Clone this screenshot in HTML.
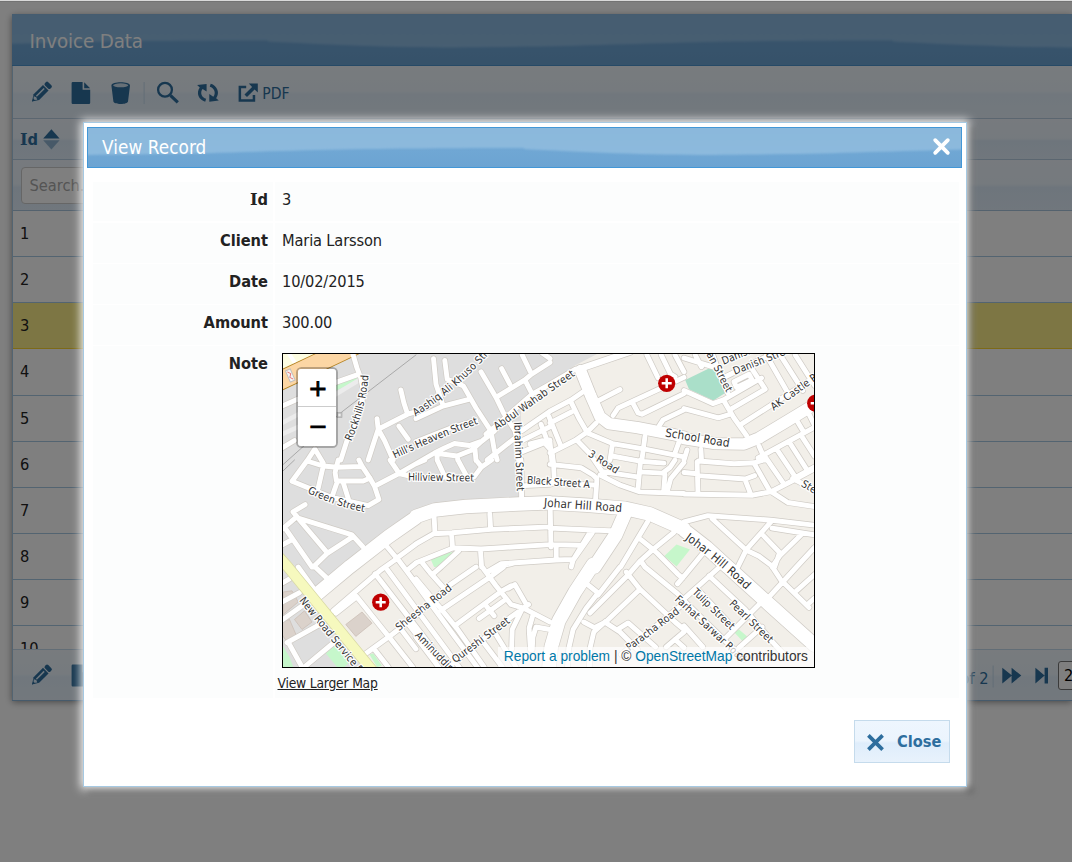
<!DOCTYPE html>
<html>
<head>
<meta charset="utf-8">
<title>Invoice Data</title>
<style>
html,body{margin:0;padding:0;}
html{overflow:hidden}
body{width:1072px;height:862px;overflow:hidden;background:#fff;position:relative;
 font-family:"DejaVu Sans Condensed","Liberation Sans",sans-serif;font-size:16.25px;color:#222;}
.abs{position:absolute;}
/* ---------- underlying grid panel ---------- */
#panel{position:absolute;left:12px;top:14px;width:1060px;height:686px;background:#fff;
 box-shadow:0 2px 7px rgba(0,0,0,.45);}
#phead{position:absolute;left:0;top:0;right:0;height:52px;overflow:hidden;background:linear-gradient(#74aad9 0,#70a7d7 55%,#6ca4d4 100%);}
#phead svg,#dtitle svg.wv{position:absolute;left:0;top:0}
#phead span{position:absolute;left:17.5px;top:15px;font-size:20.3px;color:#fff;white-space:nowrap;letter-spacing:-.1px}
.tb{position:absolute;left:0;right:0;height:52px;
 background:linear-gradient(#f0f7fd 0,#ecf5fd 48%,#e2effb 54%,#e6f1fb 100%);}
#tbar{top:52px}
#pager{top:635px;height:51px;overflow:hidden;border-top:1px solid #c5dbec;box-sizing:border-box}
#chead{position:absolute;left:0;right:0;top:104px;height:42px;box-sizing:border-box;
 border-top:1px solid #b7cde0;border-bottom:1px solid #b7cde0;
 background:linear-gradient(#eef5fc 0,#ebf4fc 48%,#dcebf9 55%,#e2eefa 100%);}
#srow{position:absolute;left:0;right:0;top:146px;height:51px;box-sizing:border-box;
 border-bottom:1px solid #a9c4dc;
 background:linear-gradient(#eef5fc 0,#ebf4fc 48%,#dcebf9 55%,#e2eefa 100%);}
#sinp{position:absolute;left:9px;top:6.5px;width:200px;height:37px;box-sizing:border-box;border:1px solid #ccc;border-radius:4px;background:#fff;
 color:#a9a9a9;font-size:16.25px;line-height:35.5px;padding-left:7.5px}
#rows{position:absolute;left:0;right:0;top:197px;height:438px;overflow:hidden}
.r{height:46.15px;box-sizing:border-box;border-bottom:1px solid #a6c9e2;line-height:45.5px;padding-left:8px;font-size:16.25px;color:#222}
.r.sel{background:#fbec88;border-bottom-color:#fad42e;}
#overlay{position:absolute;left:0;top:0;width:1072px;height:862px;background:rgba(0,0,0,.5);}
#topstrip{position:absolute;left:0;top:0;width:1072px;height:1px;background:#d9d9d9}
#topstrip2{position:absolute;left:0;top:1px;width:1072px;height:1px;background:#737373}
/* ---------- dialog ---------- */
#dlg{position:absolute;left:83px;top:122px;width:884px;height:665px;box-sizing:border-box;border:1px solid #a6c9e2;
 background:#fff;
 box-shadow:0 0 9px 2px rgba(255,255,255,.95), 5px 5px 6px 1px rgba(0,0,0,.35);}
#dtitle{position:absolute;left:3px;top:4px;width:875px;height:41px;box-sizing:border-box;border:1px solid #4297d7;
 background:linear-gradient(#74aad7 0,#70a7d4 55%,#6ca4d2 100%);}
#dtitle span{position:absolute;left:14px;top:9px;color:#fff;font-size:18.75px;white-space:nowrap;letter-spacing:.08px}
.lbl{position:absolute;left:61px;width:123px;text-align:right;font-weight:bold;font-size:16.25px;color:#222;white-space:nowrap;line-height:20px}
.val{position:absolute;left:198px;font-size:16.25px;color:#222;white-space:nowrap;line-height:20px;letter-spacing:-.15px}
#map{position:absolute;left:198px;top:230px;width:533px;height:315px;box-sizing:border-box;border:1px solid #000;overflow:hidden;background:#f2efe9}
#vlm{position:absolute;left:193.5px;top:551px;font-size:13.75px;line-height:18px;letter-spacing:-.2px;color:#222;text-decoration:underline;white-space:nowrap}
#closeb{position:absolute;left:770px;top:597px;width:96px;height:43px;box-sizing:border-box;border:1px solid #c5dbec;
 background:linear-gradient(#eef6fe 0,#ebf4fd 48%,#dfedfb 54%,#e8f2fc 100%);}
#closeb span{position:absolute;left:42px;top:11px;font-weight:bold;font-size:16.25px;color:#2e6e9e;line-height:20px}
#msvg{position:absolute;left:0;top:0;display:block}
#msvg .lb text{font-family:"DejaVu Sans Condensed","Liberation Sans",sans-serif;fill:#333;stroke:#fff;stroke-width:2.6px;stroke-linejoin:round;paint-order:stroke fill;dominant-baseline:central;stroke-opacity:.9}
#zc{position:absolute;left:12.5px;top:12.6px;border:2.5px solid rgba(0,0,0,.25);border-radius:5.5px;background-clip:padding-box;width:38.7px}
#zc a{display:block;width:38.7px;height:38.4px;background:#fff;color:#000;text-align:center;font:23px/39px "DejaVu Sans","Liberation Sans",sans-serif;-webkit-text-stroke:.9px #000;text-indent:2px}
#zc #zin{border-bottom:1.25px solid #ccc;border-radius:3px 3px 0 0;height:37.8px}
#zout{border-radius:0 0 3px 3px}
#attr{position:absolute;right:0;bottom:0;height:20px;line-height:19px;padding:0 6px;background:rgba(255,255,255,.7);color:#333;white-space:nowrap;
 font:13.75px/19px "Liberation Sans",sans-serif;}
#attr a{color:#0078a8}
#idh{position:absolute;left:8px;top:10.5px;font-weight:bold;font-size:16.25px;color:#2e6e9e;line-height:20px}
#psel{position:absolute;left:1046px;top:11px;width:50px;height:29px;box-sizing:border-box;border:1px solid #777;border-radius:3px;background:#fff;font-size:16.25px;line-height:27px;padding-left:5px;color:#000}
.sf{font-family:"DejaVu Serif","Liberation Serif",serif}
#ftab{position:absolute;left:9px;top:59px;width:866px;height:520px}
#ftab i{position:absolute;left:0;width:180px;background:#fcfdfd;display:block}
#ftab i::after{content:"";position:absolute;left:182px;top:0;width:684px;height:100%;background:#fcfdfd}
</style>
</head>
<body>
<div id="panel">
 <div id="phead"><svg width="1100" height="52" viewBox="0 0 1100 52"><defs><linearGradient id="hg" x1="0" y1="0" x2="0" y2="1"><stop offset="0" stop-color="#8bb9e1"/><stop offset="1" stop-color="#8fbde4"/></linearGradient></defs><path fill="url(#hg)" style="filter:blur(.9px)" d="M-6 -6H1106L1106.0 33.1L1100.0 33.1L1092.0 33.2L1080.0 33.3L1068.0 33.4L1056.0 33.4L1044.0 33.3L1032.0 33.1L1020.0 33.0L1008.0 32.8L996.0 32.5L984.0 32.1L972.0 31.6L960.0 31.2L948.0 30.8L936.0 30.3L924.0 29.7L912.0 29.1L900.0 28.5L888.0 27.9L881.0 27.6L881.0 26.4L876.0 26.4L864.0 26.5L852.0 26.5L840.0 26.6L828.0 26.6L816.0 26.7L804.0 26.7L792.0 26.8L780.0 26.9L768.0 27.0L756.0 27.1L744.0 27.3L732.0 27.4L720.0 27.6L708.0 27.8L696.0 28.0L684.0 28.2L672.0 28.5L660.0 28.9L648.0 29.2L636.0 29.5L624.0 29.9L612.0 30.2L600.0 30.6L588.0 31.0L576.0 31.3L564.0 31.7L552.0 31.9L540.0 32.2L528.0 32.4L516.0 32.6L504.0 32.8L492.0 32.9L480.0 33.1L468.0 33.2L456.0 33.3L444.0 33.4L432.0 33.4L420.0 33.3L408.0 33.1L396.0 33.0L384.0 32.8L372.0 32.6L360.0 32.1L348.0 31.7L336.0 31.2L324.0 30.8L312.0 30.3L300.0 29.7L288.0 29.1L276.0 28.6L264.0 28.0L256.0 27.6L256.0 26.4L252.0 26.4L240.0 26.5L228.0 26.5L216.0 26.6L204.0 26.6L192.0 26.7L180.0 26.7L168.0 26.8L156.0 26.9L144.0 27.0L132.0 27.1L120.0 27.3L108.0 27.4L96.0 27.6L84.0 27.8L72.0 28.0L60.0 28.2L48.0 28.5L36.0 28.8L24.0 29.2L12.0 29.5L0.0 29.8L-6 29.8Z"/></svg><span>Invoice Data</span></div>
 <div id="tbar" class="tb"></div>
 <svg class="ticons" style="position:absolute;left:0;top:52px" width="300" height="52" viewBox="12 66 300 52" fill="#2e6e9e">
  <g id="ic-pencil" transform="translate(40.9 92.6) rotate(45)">
   <rect x="-3.9" y="-12.6" width="7.8" height="4.6" rx="1.7"/>
   <path d="M-3.9 -6.9H3.9V6.4L0 12.6L-3.9 6.4Z"/>
   <path d="M-0.6 -5.2V5.8" stroke="#dfeffc" stroke-width="1.5" fill="none"/>
   <path d="M-2.4 7.6L0 6.5L2.4 7.6L0 10.6Z" fill="#dfeffc"/>
   <path d="M-1.2 9.6L1.2 9.6L0 12.6Z"/>
  </g>
  <g id="ic-doc" transform="translate(71.6 82)">
   <path d="M1.2 0H11V7.8H18.6V20.7Q18.6 21.9 17.4 21.9H1.2Q0 21.9 0 20.7V1.2Q0 0 1.2 0Z"/>
   <path d="M12.6 0.2L18.5 6.2H12.6Z"/>
  </g>
  <g id="ic-trash" transform="translate(111.4 82)">
   <path d="M0 3.4C0 -0.9 18.6 -0.9 18.6 3.4L16.6 19.4C16.3 22.7 2.3 22.7 2 19.4Z"/>
   <ellipse cx="9.3" cy="3.3" rx="7.6" ry="2" fill="#cfe0ee"/>
  </g>
  <rect x="143.6" y="82" width="1" height="22" fill="#c5dbec"/>
  <g id="ic-search" fill="none" stroke="#2e6e9e">
   <circle cx="165" cy="89.8" r="6.9" stroke-width="2.3"/>
   <path d="M170.4 95.4L177.8 102.4" stroke-width="3.2"/>
  </g>
  <g id="ic-refresh" transform="translate(190 76)">
   <path id="rfa" d="M15.2 25.75A10 9.3 0 0 1 9.76 11.47L7.1 9.1L16.6 7.9V15.6L12.6 12.95A6.6 6.2 0 0 0 16.13 22.76Z"/>
   <path d="M15.2 25.75A10 9.3 0 0 1 9.76 11.47L7.1 9.1L16.6 7.9V15.6L12.6 12.95A6.6 6.2 0 0 0 16.13 22.76Z" transform="rotate(180 17.95 16.8)"/>
  </g>
  <g id="ic-ext" transform="translate(238.6 83.6)">
   <path d="M7.6 2.2H0V18.2H16.6V11.4H14.1V15.7H2.5V4.7H7.6Z"/>
   <path d="M10.2 0H19.2V9L16 5.8L8.4 13.4L5.9 10.9L13.5 3.3Z"/>
  </g>
  <text x="262.3" y="98.5" font-size="15.6" font-family="DejaVu Sans Condensed,Liberation Sans,sans-serif">PDF</text>
 </svg>

 <div id="chead"><span id="idh"><span class="sf">I</span>d</span>
  <svg style="position:absolute;left:30.5px;top:10px" width="17" height="21" viewBox="0 0 17 21"><path d="M0.2 9.6L8.4 0.2L16.6 9.6Z" fill="#2e6e9e"/><path d="M0.2 11.2L8.4 20.4L16.6 11.2Z" fill="#2e6e9e" opacity=".45"/></svg></div>
 <div id="srow"><div id="sinp">Search...</div></div>
 <div id="rows">
  <div class="r">1</div><div class="r">2</div><div class="r sel">3</div><div class="r">4</div><div class="r">5</div>
  <div class="r">6</div><div class="r">7</div><div class="r">8</div><div class="r">9</div><div class="r">10</div>
 </div>
 <div id="pager" class="tb">
  <svg style="position:absolute;left:0;top:0" width="1072" height="51" viewBox="12 649.5 1072 51" fill="#2e6e9e">
   <g transform="translate(40.9 675) rotate(45)">
   <rect x="-3.9" y="-12.6" width="7.8" height="4.6" rx="1.7"/>
   <path d="M-3.9 -6.9H3.9V6.4L0 12.6L-3.9 6.4Z"/>
   <path d="M-0.6 -5.2V5.8" stroke="#dfeffc" stroke-width="1.5" fill="none"/>
   <path d="M-2.4 7.6L0 6.5L2.4 7.6L0 10.6Z" fill="#dfeffc"/>
   <path d="M-1.2 9.6L1.2 9.6L0 12.6Z"/>
   </g>
   <g transform="translate(71.6 664)">
   <path d="M1.2 0H11V7.8H18.6V20.7Q18.6 21.9 17.4 21.9H1.2Q0 21.9 0 20.7V1.2Q0 0 1.2 0Z"/>
   <path d="M12.6 0.2L18.5 6.2H12.6Z"/>
   </g>
   <text x="988.5" y="683" text-anchor="end" font-size="16.25" font-family="DejaVu Sans Condensed,Liberation Sans,sans-serif">Page 1 of 2</text>
   <rect x="992.6" y="665" width="1" height="22" fill="#c5dbec"/>
   <path d="M1002.3 667.3L1012 675.1L1002.3 682.9ZM1011.6 667.3L1021.3 675.1L1011.6 682.9Z"/>
   <path d="M1035.4 667.3L1044.6 675.1L1035.4 682.9ZM1044.6 667.3H1048V682.9H1044.6Z"/>
  </svg>
  <div id="psel">20</div>
 </div>
</div>
<div style="position:absolute;left:12px;top:66px;width:1px;height:634px;background:#a6c9e2"></div>
<div style="position:absolute;left:12px;top:700px;width:1060px;height:1px;background:#8db4d6"></div>
<div style="position:absolute;left:12px;top:65px;width:1060px;height:1px;background:#4c94cf"></div>
<div id="overlay"></div>
<div id="topstrip"></div><div id="topstrip2"></div>
<div id="dlg">
 <div id="dtitle"><svg class="wv" width="873" height="39" viewBox="0 0 873 39"><defs><linearGradient id="tg" x1="0" y1="0" x2="0" y2="1"><stop offset="0" stop-color="#8ab8dc"/><stop offset="1" stop-color="#8dbadd"/></linearGradient></defs><path fill="url(#tg)" style="filter:blur(.9px)" d="M-6 -6H879L879.0 21.5L873.0 21.5L864.0 21.7L852.0 22.0L840.0 22.4L828.0 22.7L816.0 23.0L804.0 23.4L792.0 23.7L780.0 24.1L768.0 24.5L756.0 24.8L744.0 25.2L732.0 25.4L720.0 25.7L708.0 25.9L696.0 26.1L684.0 26.3L672.0 26.4L660.0 26.6L648.0 26.7L636.0 26.8L624.0 26.9L612.0 26.9L600.0 26.8L588.0 26.6L576.0 26.5L564.0 26.3L552.0 26.1L540.0 25.6L528.0 25.2L516.0 24.7L504.0 24.3L492.0 23.8L480.0 23.2L468.0 22.6L456.0 22.1L444.0 21.5L436.0 21.1L436.0 19.9L432.0 19.9L420.0 20.0L408.0 20.0L396.0 20.1L384.0 20.1L372.0 20.2L360.0 20.2L348.0 20.3L336.0 20.4L324.0 20.5L312.0 20.6L300.0 20.8L288.0 20.9L276.0 21.1L264.0 21.3L252.0 21.5L240.0 21.7L228.0 22.0L216.0 22.3L204.0 22.7L192.0 23.0L180.0 23.3L168.0 23.7L156.0 24.1L144.0 24.4L132.0 24.8L120.0 25.2L108.0 25.4L96.0 25.6L84.0 25.9L72.0 26.1L60.0 26.3L48.0 26.4L36.0 26.6L24.0 26.7L12.0 26.8L0.0 26.9L-6 26.9Z"/></svg><span>View Record</span>
  <svg style="position:absolute;left:844px;top:8.5px" width="19" height="19" viewBox="0 0 19 19"><path d="M3.2 3.2L15.8 15.8M15.8 3.2L3.2 15.8" stroke="#fff" stroke-width="3.8" stroke-linecap="round" fill="none"/></svg></div>
<div id="ftab"><i style="top:0;height:39px"></i><i style="top:41px;height:40px"></i><i style="top:82px;height:40px"></i><i style="top:123px;height:40px"></i><i style="top:164px;height:352px"></i></div>
 <div class="lbl" style="top:67px"><span class="sf">I</span>d</div><div class="val" style="top:67px">3</div>
 <div class="lbl" style="top:108px">Client</div><div class="val" style="top:108px">Maria Larsson</div>
 <div class="lbl" style="top:149px">Date</div><div class="val" style="top:149px">10/02/2015</div>
 <div class="lbl" style="top:190px">Amount</div><div class="val" style="top:190px">300.00</div>
 <div class="lbl" style="top:231px">Note</div>
 <div id="map"><svg id="msvg" width="531" height="313" viewBox="0 0 531 313">
<rect width="531" height="313" fill="#f2efe9"/>
<path fill="#dedede" d="M0 0L314 0L291 12L267 30L249 40L238 51L238 144L235 150L183 152.5L152 156L133 163L105 183L67 212L33 241L89 313L0 313Z"/>
<path fill="#fdfde2" d="M0 0L35 0L0 16Z"/>
<path fill="#aadfc9" d="M402.2 25.9L431 12.1L435.4 16.5L444.1 37.8L430.4 46.5L406 35.2Z"/>
<path fill="#c6f7cb" d="M53.4 29.6L72.8 22.1L74.6 25.9L53.4 36.5ZM148 206L156.1 199.1L174.9 197.9L163 206L153 213L151.1 213ZM381.4 201.9L393.5 190.4L407 195.6L393.5 212.5ZM-1 290.5L6.5 303L10.2 313L-1 313ZM42.8 299.2L52.8 290.5L66.5 308L61.5 313L54 313ZM86.5 300.5L90.2 299.2L99 311.8L94 313ZM451 278L456 275.5L464.8 283L459.8 287.4Z"/>
<path fill="#dbd2cb" stroke="#cbbfb6" stroke-width=".8" d="M62.8 270.5L79 258L89 269.2L72.8 282.4ZM0.2 238L9 236.8L15.2 248L0.2 260.5ZM11.5 265.5L21.5 256.8L29 268L19 275.5ZM-1 268L6.5 265.5L14 283L4 288L-1 280.5Z"/>
<g fill="none" stroke-linecap="round" stroke-linejoin="round">
<path stroke="#a9a9a9" stroke-width="1" d="M133 0.9L59 57.8L-1 111.5M-1 117.9L11.5 106"/>
<path stroke="#ececec" stroke-width="4.5" d="M-1 69L52.8 40.2L76.5 25.9M-1 80.2L24 69"/>
<path stroke="#cfcbc5" stroke-width="6.3" d="M69.6 -1L74 14L77.8 24M77.8 24L80.2 36.5L79 49L72.8 69L64 86.5L57.8 106M-1 52.1L52.8 28.4L74 20.9M117.8 35.9L120.9 49L124.6 60.2M133 57.8L124.6 60.2L95.2 75.2M94 64.6L95.2 75.2L91.5 86.5L85.2 106M95.2 75.2L101.5 86.5L110.2 106M115.9 72.1L125.2 85.2M32.1 95.4L40.2 109.1M24.6 106L31.8 95M-1 94L11.5 86.5M150.5 4.6L153 30.2L159.9 50.9M161.8 6.5L164.2 25.2L180.5 32.1L193 54L208 77.1L211.1 95.2L214.2 106M133 64.6L159.9 52.1L186.8 45.2M198 17.8L213 43.4L220.5 59L231.8 76.5L234.9 89L235.5 106M267 8.4L248.6 20.2L241.8 25.9L213 43.4M218.6 14.6L226.8 30.2M239.2 0.9L248.6 20.2M241.8 25.9L249.2 40.2M259.2 -1L267 4.6M203 80.2L210.5 74L249.2 40.2L267 30.2M133 87.8L168 74L193 66.5M230.5 85.2L204.2 106M239.2 76.5L247 71L267 57.2M239.2 86.5L267 72.8M239.2 97.8L267 86.5M258 70.2L267 94M116 119.5L151.5 99L161.5 94L171.5 89.5L186.5 91.5L199 87L211.5 77M151.5 99L174 102L189 96L199 87M154 100.2L154.2 106.5M174 102L174.9 106.5M192 95.2L193 106.5M267 30.2L292.6 15M267 57.2L288.2 46L300.1 37.8M287.6 47.1L295.8 64L304.5 79M267 69L288.9 57.8M267 99L292 86.5L304.5 77.8L313.2 69M265.8 62.2L278.2 92.9M337 35.5L314.5 47.1M330.1 61.5L335.1 54L375.8 35.2L401 23.4M350.1 49.6L355.1 59L358.9 60.2L401 39.6M376.4 71.5L380.1 65.9L401 55.9M363.9 0.9L375.1 24M378.2 0.9L387.6 20.2L392 22.8M392 0.9L401 17.8M362 82.1L358.9 106M303.2 78.4L329.5 89.6L362 95.2L401 102.8M329.5 89.6L327 106M397 85.2L392 99M457.2 70.9L488.5 50.9L531.6 23.4M446.6 55.9L482.2 35.2M440.4 45.9L451 64L463.5 81.5M401 36.5L429.8 49.6L440.4 45.9L478.5 24M401 54.6L435.4 63.8L447.9 60M429.1 -1L437.2 21.5L444.8 39M442.2 22.8L491 -1M469.1 15.2L482.2 35.2M483.5 1.5L503.5 36.5M497.2 0.9L519.8 36.5M512.2 0.9L531.6 31.5M451 27.8L466 20.2L469.1 25.9L453.5 33.4L451 27.8M401 4L429.8 12.8M412.2 0.9L418.5 12.8M476 92.1L482.2 106M475.1 104L533 72.4M514.1 67.1L519.8 76.5M526 60.2L531.6 71.5M417.9 95.2L418.5 106M404.1 95.9L401 106M9 127.2L24.6 106M9 127.2L49 143.5L85.2 151.6L95.9 145.4L91.5 132.2L86.5 123.5L79 112.2L75.9 106M24 107L40.2 112L54 113.2L79 112.5M55.2 106L52.1 118.5L53.4 127L80.2 127L87.1 124.1M40.2 112.2L35.2 134.1M54 128.5L49 142.9M60.2 128.5L66.5 148.5M91.5 132.2L116 119.5L133 123.5M107.1 106L116.5 119.8M22.1 150.6L10 157.9L15.2 164.1L69 180.8L79.6 192.5M12.1 164.1L-1 175.4M16.5 166L44.6 199.1M3.4 176L29 213M69.6 182.9L44.6 199.1L30.2 213M-1 191L8.4 186M238 106L238.6 143.5M133 123.5L191.1 122.9L198.6 112.9L208.6 106M154.2 106L161.1 121M174.9 106L183 121M193 106L198.6 112.9M133 109.8L141.8 106M133 189.8L150.5 179.8L169.2 178.8L208 175.4L267 172.9M151.1 162.9L152 179.5M206.8 159.8L207.6 175M168.6 179.8L169.5 193.5M267 190.6L198 195L170.5 193.8L133 208.8M175.5 197L158 213M197.4 195.4L198.6 213M241.8 131.6L267 130.4M267 129.1L310.1 131M267 110.4L298.2 113.8L310.1 121L313.9 124.8L312.6 144.8M317 121L337 131L357 137.9L401 139.5M320.8 117.9L354.5 122.9M357.6 106L355.1 134.1M356.4 117.9L379.5 119.1L387 113.5L392 106M382 120.4L380.8 135.4M401 108.5L387.6 124.8L384.5 136.6M267 174.1L327 176.8L333.2 175.4M307 178.2L290.1 206L288.2 213M267 190.6L297 191.2M273.2 192.2L273.2 205.4M364.5 167.9L337.6 213M357.6 185.4L368.9 194.5L374.5 199.5L394.5 219.8L399.5 224.1M390.8 178.5L370.1 195.4L357 207.2M401 167.9L424.8 161.6L488.5 166.2L531.6 171.2M401 140L469.8 141.2L488.5 137.5L508.5 127.2L531.6 114.8M488.5 137.9L504.8 148.5L531.6 152.5M414.1 107.9L415 139.1M401 118.5L414.5 119.8M415 121.6L462.2 125L471.6 121.6M462.2 126L467.2 138.8M471 109.1L486.6 136.6M415.4 107L451 109.8L471 108.8L481 106M480.5 100.5L499.6 128.2M493 94.2L511.4 121.6M505.8 87.2L523.6 115.2M517.8 80.8L531.6 102.2M509.6 124.5L531.6 136M513.5 122.9L531.6 112.9M487.9 167.9L463.5 195.4L454.8 213M429.1 164.8L462.9 195.8M480.4 181.6L496.6 198.5L491.6 213M517.9 181L497.2 201.2L489.1 213M462.9 196L476 202.2L488.5 211.6L497.9 226L526 253.5M489.1 174.1L531.6 180.8M531.6 193.5L513.5 213M15.2 213L30.9 234.9M32.1 213L43.4 223.6M-1 266.1L20.9 250.5M4 288.6L37.8 269.9M22.8 311.8L51.5 288M-1 248L16.5 238.6M-1 229.2L6.5 224.9M6.5 290.5L19 313M50.2 256.8L97 216.6L112 206M73.4 242.4L106.5 283.6M81.5 300.5L109 280.5L133 261.8M107.1 284.2L129.6 313M91.5 295.5L105.2 313M117.8 274.9L133 294.9M125.2 269.9L133 279.9M52.8 259.2L72.8 243.6M133 261.8L166.8 231.1L193 213M158 256.1L208 222.4L220.5 213M171.8 271.8L219.2 236.8L228 231.8M166.8 311.8L228 263L245.5 250.5M196.1 264.5L220.5 247M203.6 252.4L211.1 261.8M133 224.9L158 254.9L174.2 274.9L201.1 313M201.1 289.2L219.2 313M213 280.5L233 313M199.2 213L213 231.8L228 250.5L240.5 254.2L267 268M225.5 234.2L231.8 230.5L243 249.9M239.2 254.9L229.2 275.5L228.6 295.5M249.9 261.1L246.1 274.2L247.4 295.5M267 275.5L253 273L249.9 283L249.2 295.5M133 283L155.5 313M313.9 240.5L303.2 254.2L290.1 275.5L285.8 294.2L284.5 313M322.6 267.4L310.8 278L307 294.2L306.4 313M304.5 230.5L315.8 239.5M315.1 241.1L337 213M307 259.1L344.5 221.6L357 207.2M300.8 268L311.4 273.6L322.6 268L357 235.2M343.2 218L357 235.2L392 268L401 275.5M334.5 275.5L345.1 268.9L372.6 293M322.6 268.6L337 278L354.5 295.5M338.2 300.5L401 249.2M357.6 206.6L362 213L393.2 238.6M393.2 238.6L401 246.1M383.2 293L392 285.5L401 278M392 285.5L401 293.6M401 244.9L436.6 213M441.6 284.9L476 250.5M456 293.6L479.1 273M486.6 242.4L513.5 213M513.5 236.8L531.6 220.5M526 249.2L531.6 244.2M426 221.8L462.2 255.5L488.5 286.8L501 300.5M413.5 234.2L451.6 274.9M401 246.8L448.5 293L461 305.5M394.5 229.8L402 221L419.5 199.8M401 271.8L419.8 293M139.5 209.1L147 218.5L162 235.4M207.6 216.6L217 212.2L231 209.1M102.6 191L115.8 206.6L124.4 217.9L172 283L194.5 313.5M104.5 216L153.9 283L176.4 313.5M92 219.8L97 226L140.8 283L164.1 313.5M112 205.4L133 190M125.8 214.8L133 209M150.1 219.8L158 213M267.2 154L268 193M205.5 217.2L218 209.8L273 206L290.5 205.5L309.2 179M266.8 86L269.2 111M247 89.8L259.5 86.6L268.9 97.2L270.5 108.5L271.4 129.1M328.9 102L357 107.2L381 109.1M293.9 86.2L307 99.8L321.4 121"/>
<path stroke="#cfcbc5" stroke-width="7.6" d="M295.8 15.2L347 -2.2"/>
<path stroke="#cfcbc5" stroke-width="12.8" d="M297.6 16.5L307.6 41.5L317 62.8L325.8 69.6L354.5 73.6L392 80.9L401 83M401 84.6L432.2 89.6L461 90L476 84L501 69L531.6 50.5"/>
<path stroke="#cfcbc5" stroke-width="15" d="M66.5 213L105.2 182.9L133 163.5M133 162.5L151.8 156L183 152.5L235.5 150L267 148.8M267 149.1L304.5 151.2L342 154.4L367 160L401 175M343.5 156L332.6 181L311.4 213M401 176L423.5 193.5L444.8 213M67.1 212.4L32.8 241.1M310.1 210.5L292 238L275.8 266.8L268.2 293L265.8 315.5M442.2 210.5L488.5 252.4L531.6 291.1"/>
<path stroke="#fff" stroke-width="4" stroke-linecap="butt" d="M5.9 -0.4L12.8 10.2"/>
<path stroke="#b3811f" stroke-width="19.5" stroke-linecap="butt" d="M-33 41L137 -39.5"/>
<path stroke="#fcd6a4" stroke-width="18" stroke-linecap="butt" d="M-33 41L137 -39.5"/>
<path stroke="#fff" stroke-width="4.9" d="M69.6 -1L74 14L77.8 24M77.8 24L80.2 36.5L79 49L72.8 69L64 86.5L57.8 106M-1 52.1L52.8 28.4L74 20.9M117.8 35.9L120.9 49L124.6 60.2M133 57.8L124.6 60.2L95.2 75.2M94 64.6L95.2 75.2L91.5 86.5L85.2 106M95.2 75.2L101.5 86.5L110.2 106M115.9 72.1L125.2 85.2M32.1 95.4L40.2 109.1M24.6 106L31.8 95M-1 94L11.5 86.5M150.5 4.6L153 30.2L159.9 50.9M161.8 6.5L164.2 25.2L180.5 32.1L193 54L208 77.1L211.1 95.2L214.2 106M133 64.6L159.9 52.1L186.8 45.2M198 17.8L213 43.4L220.5 59L231.8 76.5L234.9 89L235.5 106M267 8.4L248.6 20.2L241.8 25.9L213 43.4M218.6 14.6L226.8 30.2M239.2 0.9L248.6 20.2M241.8 25.9L249.2 40.2M259.2 -1L267 4.6M203 80.2L210.5 74L249.2 40.2L267 30.2M133 87.8L168 74L193 66.5M230.5 85.2L204.2 106M239.2 76.5L247 71L267 57.2M239.2 86.5L267 72.8M239.2 97.8L267 86.5M258 70.2L267 94M116 119.5L151.5 99L161.5 94L171.5 89.5L186.5 91.5L199 87L211.5 77M151.5 99L174 102L189 96L199 87M154 100.2L154.2 106.5M174 102L174.9 106.5M192 95.2L193 106.5M267 30.2L292.6 15M267 57.2L288.2 46L300.1 37.8M287.6 47.1L295.8 64L304.5 79M267 69L288.9 57.8M267 99L292 86.5L304.5 77.8L313.2 69M265.8 62.2L278.2 92.9M337 35.5L314.5 47.1M330.1 61.5L335.1 54L375.8 35.2L401 23.4M350.1 49.6L355.1 59L358.9 60.2L401 39.6M376.4 71.5L380.1 65.9L401 55.9M363.9 0.9L375.1 24M378.2 0.9L387.6 20.2L392 22.8M392 0.9L401 17.8M362 82.1L358.9 106M303.2 78.4L329.5 89.6L362 95.2L401 102.8M329.5 89.6L327 106M397 85.2L392 99M457.2 70.9L488.5 50.9L531.6 23.4M446.6 55.9L482.2 35.2M440.4 45.9L451 64L463.5 81.5M401 36.5L429.8 49.6L440.4 45.9L478.5 24M401 54.6L435.4 63.8L447.9 60M429.1 -1L437.2 21.5L444.8 39M442.2 22.8L491 -1M469.1 15.2L482.2 35.2M483.5 1.5L503.5 36.5M497.2 0.9L519.8 36.5M512.2 0.9L531.6 31.5M451 27.8L466 20.2L469.1 25.9L453.5 33.4L451 27.8M401 4L429.8 12.8M412.2 0.9L418.5 12.8M476 92.1L482.2 106M475.1 104L533 72.4M514.1 67.1L519.8 76.5M526 60.2L531.6 71.5M417.9 95.2L418.5 106M404.1 95.9L401 106M9 127.2L24.6 106M9 127.2L49 143.5L85.2 151.6L95.9 145.4L91.5 132.2L86.5 123.5L79 112.2L75.9 106M24 107L40.2 112L54 113.2L79 112.5M55.2 106L52.1 118.5L53.4 127L80.2 127L87.1 124.1M40.2 112.2L35.2 134.1M54 128.5L49 142.9M60.2 128.5L66.5 148.5M91.5 132.2L116 119.5L133 123.5M107.1 106L116.5 119.8M22.1 150.6L10 157.9L15.2 164.1L69 180.8L79.6 192.5M12.1 164.1L-1 175.4M16.5 166L44.6 199.1M3.4 176L29 213M69.6 182.9L44.6 199.1L30.2 213M-1 191L8.4 186M238 106L238.6 143.5M133 123.5L191.1 122.9L198.6 112.9L208.6 106M154.2 106L161.1 121M174.9 106L183 121M193 106L198.6 112.9M133 109.8L141.8 106M133 189.8L150.5 179.8L169.2 178.8L208 175.4L267 172.9M151.1 162.9L152 179.5M206.8 159.8L207.6 175M168.6 179.8L169.5 193.5M267 190.6L198 195L170.5 193.8L133 208.8M175.5 197L158 213M197.4 195.4L198.6 213M241.8 131.6L267 130.4M267 129.1L310.1 131M267 110.4L298.2 113.8L310.1 121L313.9 124.8L312.6 144.8M317 121L337 131L357 137.9L401 139.5M320.8 117.9L354.5 122.9M357.6 106L355.1 134.1M356.4 117.9L379.5 119.1L387 113.5L392 106M382 120.4L380.8 135.4M401 108.5L387.6 124.8L384.5 136.6M267 174.1L327 176.8L333.2 175.4M307 178.2L290.1 206L288.2 213M267 190.6L297 191.2M273.2 192.2L273.2 205.4M364.5 167.9L337.6 213M357.6 185.4L368.9 194.5L374.5 199.5L394.5 219.8L399.5 224.1M390.8 178.5L370.1 195.4L357 207.2M401 167.9L424.8 161.6L488.5 166.2L531.6 171.2M401 140L469.8 141.2L488.5 137.5L508.5 127.2L531.6 114.8M488.5 137.9L504.8 148.5L531.6 152.5M414.1 107.9L415 139.1M401 118.5L414.5 119.8M415 121.6L462.2 125L471.6 121.6M462.2 126L467.2 138.8M471 109.1L486.6 136.6M415.4 107L451 109.8L471 108.8L481 106M480.5 100.5L499.6 128.2M493 94.2L511.4 121.6M505.8 87.2L523.6 115.2M517.8 80.8L531.6 102.2M509.6 124.5L531.6 136M513.5 122.9L531.6 112.9M487.9 167.9L463.5 195.4L454.8 213M429.1 164.8L462.9 195.8M480.4 181.6L496.6 198.5L491.6 213M517.9 181L497.2 201.2L489.1 213M462.9 196L476 202.2L488.5 211.6L497.9 226L526 253.5M489.1 174.1L531.6 180.8M531.6 193.5L513.5 213M15.2 213L30.9 234.9M32.1 213L43.4 223.6M-1 266.1L20.9 250.5M4 288.6L37.8 269.9M22.8 311.8L51.5 288M-1 248L16.5 238.6M-1 229.2L6.5 224.9M6.5 290.5L19 313M50.2 256.8L97 216.6L112 206M73.4 242.4L106.5 283.6M81.5 300.5L109 280.5L133 261.8M107.1 284.2L129.6 313M91.5 295.5L105.2 313M117.8 274.9L133 294.9M125.2 269.9L133 279.9M52.8 259.2L72.8 243.6M133 261.8L166.8 231.1L193 213M158 256.1L208 222.4L220.5 213M171.8 271.8L219.2 236.8L228 231.8M166.8 311.8L228 263L245.5 250.5M196.1 264.5L220.5 247M203.6 252.4L211.1 261.8M133 224.9L158 254.9L174.2 274.9L201.1 313M201.1 289.2L219.2 313M213 280.5L233 313M199.2 213L213 231.8L228 250.5L240.5 254.2L267 268M225.5 234.2L231.8 230.5L243 249.9M239.2 254.9L229.2 275.5L228.6 295.5M249.9 261.1L246.1 274.2L247.4 295.5M267 275.5L253 273L249.9 283L249.2 295.5M133 283L155.5 313M313.9 240.5L303.2 254.2L290.1 275.5L285.8 294.2L284.5 313M322.6 267.4L310.8 278L307 294.2L306.4 313M304.5 230.5L315.8 239.5M315.1 241.1L337 213M307 259.1L344.5 221.6L357 207.2M300.8 268L311.4 273.6L322.6 268L357 235.2M343.2 218L357 235.2L392 268L401 275.5M334.5 275.5L345.1 268.9L372.6 293M322.6 268.6L337 278L354.5 295.5M338.2 300.5L401 249.2M357.6 206.6L362 213L393.2 238.6M393.2 238.6L401 246.1M383.2 293L392 285.5L401 278M392 285.5L401 293.6M401 244.9L436.6 213M441.6 284.9L476 250.5M456 293.6L479.1 273M486.6 242.4L513.5 213M513.5 236.8L531.6 220.5M526 249.2L531.6 244.2M426 221.8L462.2 255.5L488.5 286.8L501 300.5M413.5 234.2L451.6 274.9M401 246.8L448.5 293L461 305.5M394.5 229.8L402 221L419.5 199.8M401 271.8L419.8 293M139.5 209.1L147 218.5L162 235.4M207.6 216.6L217 212.2L231 209.1M102.6 191L115.8 206.6L124.4 217.9L172 283L194.5 313.5M104.5 216L153.9 283L176.4 313.5M92 219.8L97 226L140.8 283L164.1 313.5M112 205.4L133 190M125.8 214.8L133 209M150.1 219.8L158 213M267.2 154L268 193M205.5 217.2L218 209.8L273 206L290.5 205.5L309.2 179M266.8 86L269.2 111M247 89.8L259.5 86.6L268.9 97.2L270.5 108.5L271.4 129.1M328.9 102L357 107.2L381 109.1M293.9 86.2L307 99.8L321.4 121"/>
<path stroke="#fff" stroke-width="6.2" d="M295.8 15.2L347 -2.2"/>
<path stroke="#fff" stroke-width="11.4" d="M297.6 16.5L307.6 41.5L317 62.8L325.8 69.6L354.5 73.6L392 80.9L401 83M401 84.6L432.2 89.6L461 90L476 84L501 69L531.6 50.5"/>
<path stroke="#fff" stroke-width="13.6" d="M66.5 213L105.2 182.9L133 163.5M133 162.5L151.8 156L183 152.5L235.5 150L267 148.8M267 149.1L304.5 151.2L342 154.4L367 160L401 175M343.5 156L332.6 181L311.4 213M401 176L423.5 193.5L444.8 213M67.1 212.4L32.8 241.1M310.1 210.5L292 238L275.8 266.8L268.2 293L265.8 315.5M442.2 210.5L488.5 252.4L531.6 291.1"/>
<path stroke="#d8d9a5" stroke-width="11.2" stroke-linecap="butt" d="M-8.5 198L4.9 213L86.5 313L94 321.8"/>
<path stroke="#f6f9be" stroke-width="9.8" stroke-linecap="butt" d="M-8.5 198L4.9 213L86.5 313L94 321.8"/>
</g>
<g transform="translate(7.3 21.5) rotate(-24)"><rect x="-2.6" y="-6" width="5.2" height="12" fill="#f4f4f4" stroke="#bdbdbd" stroke-width=".9"/><path d="M-1.2 -4.5L1.2 -1.5L-1.2 1.5L1.2 4.5" stroke="#e87070" stroke-width=".9" fill="none"/></g>
<rect x="54.0" y="58.5" width="5" height="5" fill="#c2c2c2" stroke="#a5a5a5" stroke-width=".6"/><circle cx="56.5" cy="61.0" r="1.3" fill="#ececec"/>
<defs>
<path id="lp0" d="M64.6 86 Q80 50 81.3 21"/>
<path id="lp1" d="M130.5 59 Q177 30 219 -21"/>
<path id="lp2" d="M110 101 Q157 79 194 66"/>
<path id="lp3" d="M211.5 73 L290 18"/>
<path id="lp4" d="M235 68 L238 137"/>
<path id="lp5" d="M125 122.5 L191 123.5"/>
<path id="lp6" d="M26 135 Q54 149 82 154"/>
<path id="lp7" d="M382.3 78.5 L446.5 89.3"/>
<path id="lp8" d="M306.6 98.3 L335.3 116.5"/>
<path id="lp9" d="M244 125.5 L307 130"/>
<path id="lp10" d="M261 148.5 L339 154"/>
<path id="lp11" d="M404 182 Q433 202 466 233"/>
<path id="lp12" d="M113.6 274 L167 232"/>
<path id="lp13" d="M134.5 279 L192 339"/>
<path id="lp14" d="M170 306 L225 265"/>
<path id="lp15" d="M19 244 L92 334"/>
<path id="lp16" d="M344 294 L394.5 255.5"/>
<path id="lp17" d="M394 243 L465 309"/>
<path id="lp18" d="M411.6 236 L450.4 273.6"/>
<path id="lp19" d="M448.5 247.4 L489 286.7"/>
<path id="lp20" d="M450.4 17 L517 -9.3"/>
<path id="lp21" d="M439 7 L506 -20"/>
<path id="lp22" d="M410 -34 L447 37"/>
<path id="lp23" d="M488.5 53.5 L543 14.3"/>
<path id="lp24" d="M519.7 128.3 L565 156"/>
</defs>
<g class="lb">
<text font-size="10.5" textLength="67.5"><textPath href="#lp0" textLength="67.5">Rockhills Road</textPath></text>
<text font-size="10.5"><textPath href="#lp1">Aashiq Ali Khuso Street</textPath></text>
<text font-size="10.5" textLength="91"><textPath href="#lp2" textLength="91">Hill&#39;s Heaven Street</textPath></text>
<text font-size="10.5" textLength="95.9"><textPath href="#lp3" textLength="95.9">Abdul Wahab Street</textPath></text>
<text font-size="10.5" textLength="69.1"><textPath href="#lp4" textLength="69.1">Ibrahim Street</textPath></text>
<text font-size="10.5" textLength="66"><textPath href="#lp5" textLength="66">Hillview Street</textPath></text>
<text font-size="10.5" textLength="59.3"><textPath href="#lp6" textLength="59.3">Green Street</textPath></text>
<text font-size="11.8" textLength="65.1"><textPath href="#lp7" textLength="65.1">School Road</textPath></text>
<text font-size="10.5" textLength="34"><textPath href="#lp8" textLength="34">3 Road</textPath></text>
<text font-size="10.5" textLength="63.2"><textPath href="#lp9" textLength="63.2">Black Street A</textPath></text>
<text font-size="11.8" textLength="78.2"><textPath href="#lp10" textLength="78.2">Johar Hill Road</textPath></text>
<text font-size="11.8" textLength="80.4"><textPath href="#lp11" textLength="80.4">Johar Hill Road</textPath></text>
<text font-size="10.5" textLength="67.9"><textPath href="#lp12" textLength="67.9">Sheesha Road</textPath></text>
<text font-size="10.5"><textPath href="#lp13">Aminuddin Road</textPath></text>
<text font-size="10.5" textLength="68.6"><textPath href="#lp14" textLength="68.6">Qureshi Street</textPath></text>
<text font-size="10.5"><textPath href="#lp15">New Road Service Road</textPath></text>
<text font-size="10.5" textLength="63.5"><textPath href="#lp16" textLength="63.5">Paracha Road</textPath></text>
<text font-size="10.5"><textPath href="#lp17">Farhat Sarwar Road</textPath></text>
<text font-size="10.5" textLength="54"><textPath href="#lp18" textLength="54">Tulip Street</textPath></text>
<text font-size="10.5" textLength="56.4"><textPath href="#lp19" textLength="56.4">Pearl Street</textPath></text>
<text font-size="10.5"><textPath href="#lp20">Danish Street</textPath></text>
<text font-size="10.5"><textPath href="#lp21">Danish Street</textPath></text>
<text font-size="10.5" text-anchor="end"><textPath href="#lp22" startOffset="100%">Rehman Street</textPath></text>
<text font-size="10.5"><textPath href="#lp23">AK Castle Road</textPath></text>
<text font-size="10.5"><textPath href="#lp24">Steel Road</textPath></text>
</g>
<g transform="translate(383.7 29.3)"><circle r="8.6" fill="#bf0000"/><path d="M-5 0H5M0 -5V5" stroke="#fff" stroke-width="2.5" fill="none"/></g>
<g transform="translate(97.7 248.2)"><circle r="8.6" fill="#bf0000"/><path d="M-5 0H5M0 -5V5" stroke="#fff" stroke-width="2.5" fill="none"/></g>
<g transform="translate(532.7 49.2)"><circle r="8.6" fill="#bf0000"/><path d="M-5 0H5M0 -5V5" stroke="#fff" stroke-width="2.5" fill="none"/></g>
</svg>
  <div id="zc"><a id="zin">+</a><a id="zout">&#8722;</a></div>
  <div id="attr"><a>Report a problem</a> | &#169; <a>OpenStreetMap</a> contributors</div>
 </div>
 <div id="vlm">View Larger Map</div>
 <div id="closeb"><svg style="position:absolute;left:11px;top:12px" width="19" height="19" viewBox="0 0 19 19"><path d="M2.4 2.4L16.6 16.6M16.6 2.4L2.4 16.6" stroke="#2e6e9e" stroke-width="3.7" fill="none"/></svg><span>Close</span></div>
</div>
</body>
</html>
